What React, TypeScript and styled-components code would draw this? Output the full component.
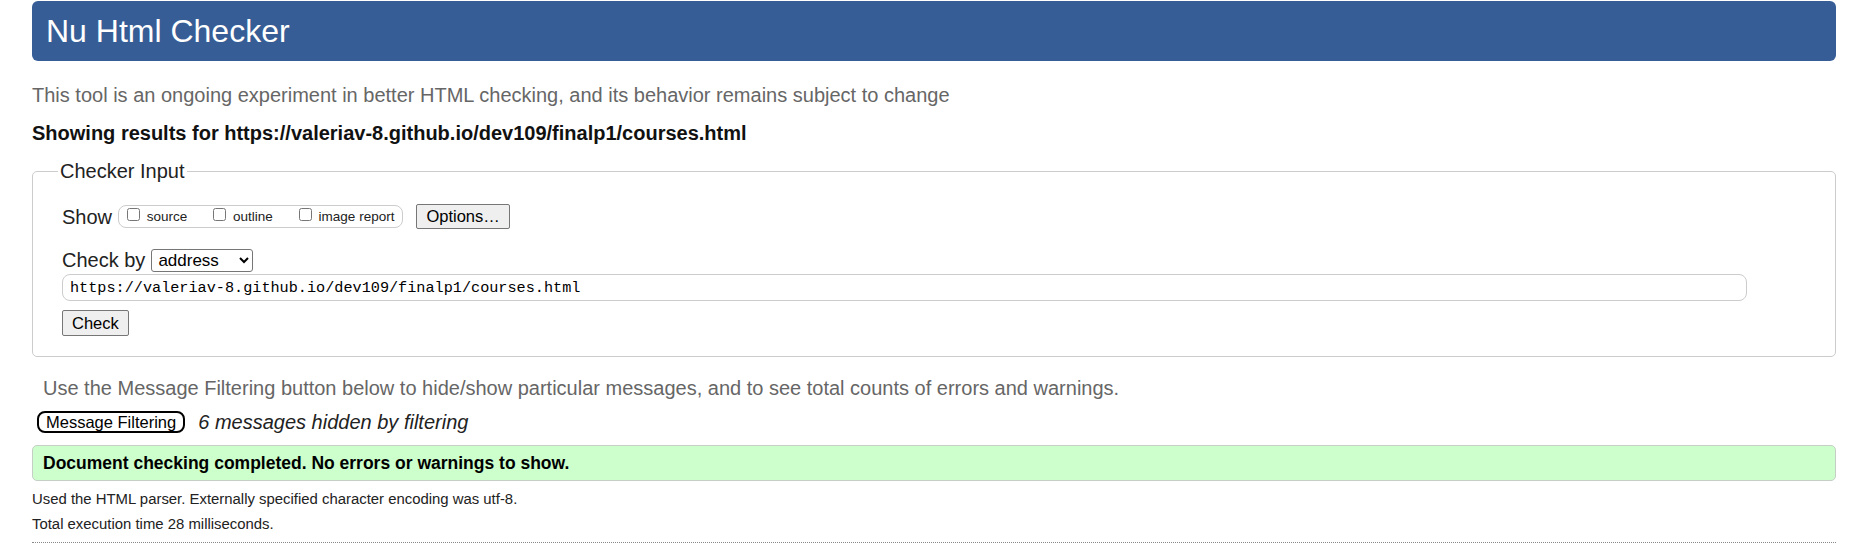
import React from 'react';
import styled, { createGlobalStyle } from 'styled-components';

const GlobalStyle = createGlobalStyle`
  html, body {
    margin: 0;
    padding: 0;
    background: #fff;
  }

  body {
    font-family: "Liberation Sans", Arial, sans-serif;
    color: #222;
  }
`;

const App = () => {
  return (
    <Page>
      <GlobalStyle />

      <Header>Nu Html Checker</Header>

      <Intro>
        This tool is an ongoing experiment in better HTML checking, and its behavior remains subject to change
      </Intro>

      <Results>Showing results for https://valeriav-8.github.io/dev109/finalp1/courses.html</Results>

      <CheckerForm>
        <Legend>Checker Input</Legend>

        <Row $top={0}>
          <Label>Show</Label>
          <ShowGroup>
            <SmallLabel>
              <input type="checkbox" /> source
            </SmallLabel>
            <SmallLabel>
              <input type="checkbox" /> outline
            </SmallLabel>
            <SmallLabel>
              <input type="checkbox" /> image report
            </SmallLabel>
          </ShowGroup>
          <Button>Options…</Button>
        </Row>

        <Row $top={19}>
          <Label>Check by</Label>
          <Select defaultValue="address">
            <option value="address">address</option>
            <option value="file">file upload</option>
            <option value="text">text input</option>
          </Select>
        </Row>

        <Row $top={2}>
          <UrlInput type="url" defaultValue="https://valeriav-8.github.io/dev109/finalp1/courses.html" />
        </Row>

        <Row $top={9}>
          <Button $height={26}>Check</Button>
        </Row>
      </CheckerForm>

      <FilterHint>
        Use the Message Filtering button below to hide/show particular messages, and to see total counts of errors and warnings.
      </FilterHint>

      <FilterRow>
        <FilterButton>Message Filtering</FilterButton>
        <HiddenCount>6 messages hidden by filtering</HiddenCount>
      </FilterRow>

      <Success>Document checking completed. No errors or warnings to show.</Success>

      <Details>Used the HTML parser. Externally specified character encoding was utf-8.</Details>
      <Details>Total execution time 28 milliseconds.</Details>

      <Divider />
    </Page>
  );
};

const Page = styled.div`
  padding: 1px 24px 0 32px;
`;

const Header = styled.h1`
  margin: 0;
  height: 60px;
  padding: 0 14px;
  display: flex;
  align-items: center;
  background-color: #365d95;
  border-radius: 6px;
  color: #fff;
  font-size: 32px;
  line-height: 37px;
  font-weight: normal;
`;

const Intro = styled.p`
  margin: 22px 0 0;
  font-size: 20px;
  line-height: 24px;
  color: #666;
`;

const Results = styled.p`
  margin: 15px 0 0;
  font-size: 20px;
  line-height: 22px;
  font-weight: bold;
  color: #111;
`;

const CheckerForm = styled.fieldset`
  margin: 15px 0 0;
  padding: 21px 28px 20px 29px;
  min-width: 0;
  border: 1px solid #ccc;
  border-radius: 5px;
  display: flex;
  flex-direction: column;
  align-items: flex-start;
`;

const Legend = styled.legend`
  margin-left: -4px;
  padding: 0 2px;
  font-size: 20px;
  line-height: 24px;
  color: #222;
`;

const Row = styled.div<{ $top: number }>`
  margin-top: ${props => props.$top}px;
  width: 100%;
  display: flex;
  align-items: center;
`;

const Label = styled.span`
  font-size: 20px;
  line-height: 24px;
  margin-right: 6px;
`;

const ShowGroup = styled.div`
  height: 21px;
  padding: 0 8px 0 4px;
  display: flex;
  align-items: center;
  gap: 22px;
  border: 1px solid #ccc;
  border-radius: 8px;
`;

const SmallLabel = styled.label`
  display: block;
  white-space: nowrap;
  font-size: 13.5px;
  line-height: 16px;

  input {
    width: 13px;
    height: 13px;
    margin: 0 3px 0 4px;
    vertical-align: baseline;
  }
`;

const Button = styled.button<{ $height?: number }>`
  height: ${props => props.$height || 25}px;
  margin-left: ${props => (props.$height ? 0 : 13)}px;
  padding: 0 9px;
  font-family: "Liberation Sans", Arial, sans-serif;
  font-size: 16.5px;
  color: #000;
  background-color: #efefef;
  border: 1px solid #767676;
  border-radius: 2px;
`;

const Select = styled.select`
  width: 102px;
  height: 23px;
  padding: 0 2px;
  font-family: "Liberation Sans", Arial, sans-serif;
  font-size: 17px;
  color: #000;
  background-color: #fff;
  border: 1px solid #767676;
  border-radius: 3px;
`;

const UrlInput = styled.input`
  width: calc(100% - 60px);
  height: 27px;
  box-sizing: border-box;
  padding: 0 7px;
  font-family: "Liberation Mono", "DejaVu Sans Mono", monospace;
  font-size: 15.2px;
  color: #000;
  border: 1px solid #ccc;
  border-radius: 8px;
  outline: none;
`;

const FilterHint = styled.p`
  margin: 19px 0 0;
  padding-left: 11px;
  font-size: 20px;
  line-height: 24px;
  color: #666;
`;

const FilterRow = styled.div`
  margin-top: 10px;
  padding-left: 5px;
  display: flex;
  align-items: center;
  gap: 13px;
`;

const FilterButton = styled.button`
  height: 22px;
  padding: 0 7px;
  font-family: "Liberation Sans", Arial, sans-serif;
  font-size: 16.5px;
  line-height: 18px;
  color: #000;
  background-color: #fff;
  border: 2px solid #000;
  border-radius: 8px;
`;

const HiddenCount = styled.span`
  font-size: 20px;
  line-height: 24px;
  font-style: italic;
  color: #222;
`;

const Success = styled.div`
  margin-top: 11px;
  padding: 6px 10px;
  background-color: #ccffcc;
  border: 1px solid #c6cfc6;
  border-radius: 5px;
  font-size: 17.5px;
  line-height: 22px;
  font-weight: bold;
  color: #000;
`;

const Details = styled.p`
  margin: 10px 0 0;
  font-size: 14.9px;
  line-height: 17px;
  color: #222;

  & + & {
    margin-top: 8px;
  }
`;

const Divider = styled.hr`
  margin: 9px 0 0;
  border: 0;
  border-top: 1px dotted #888;
`;

export default App;
